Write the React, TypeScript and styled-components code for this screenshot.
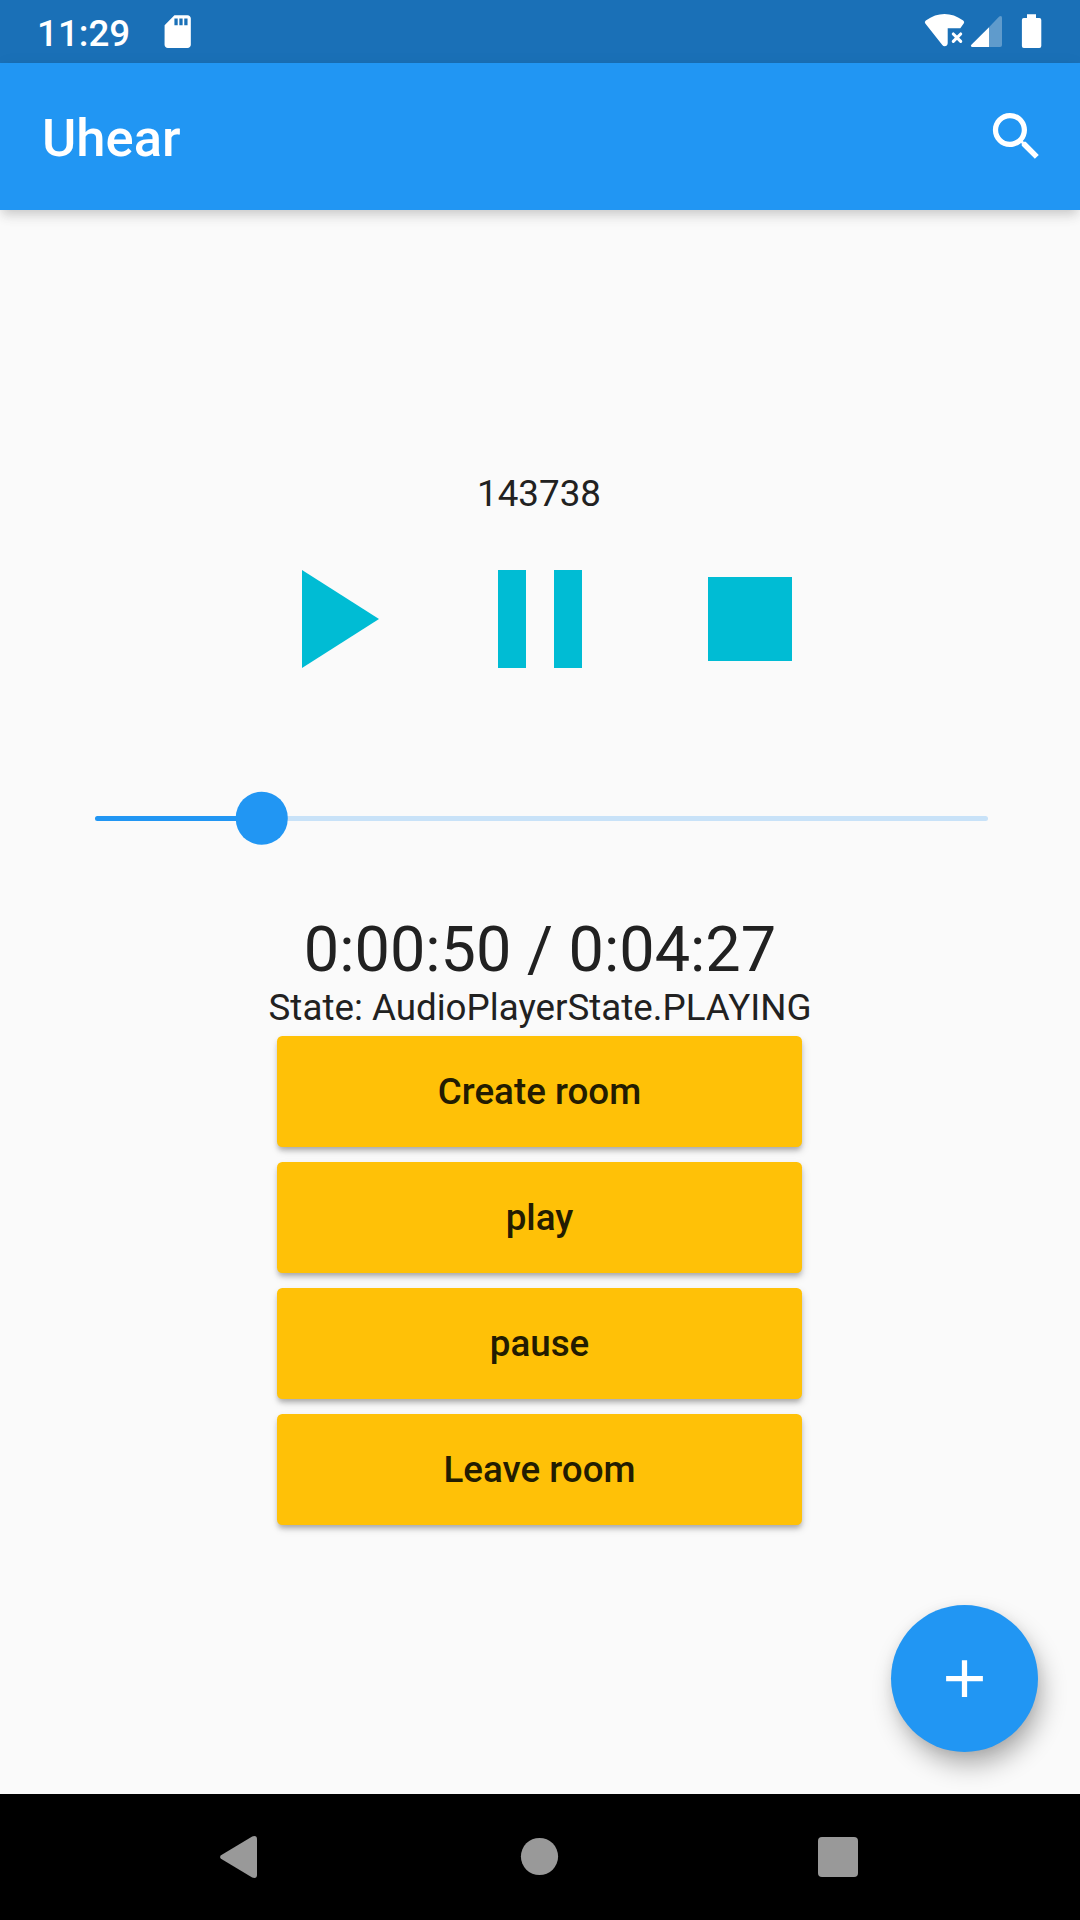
import React from "react";
import styled, { createGlobalStyle } from "styled-components";

const GlobalStyle = createGlobalStyle`
  html, body { margin: 0; padding: 0; }
  body { font-family: Roboto, "Noto Sans", sans-serif; background: #fafafa; }
  button { font-family: inherit; border: 0; padding: 0; margin: 0; }
`;

const Screen = styled.div`
  position: relative;
  width: 1080px;
  height: 1920px;
  display: flex;
  flex-direction: column;
  overflow: hidden;
  background: #fafafa;
  color: #212121;
  svg { display: block; flex: none; }
`;

const StatusBar = styled.div`
  height: 63px;
  flex: none;
  display: flex;
  justify-content: space-between;
  background: #1a70b7;
  color: #fff;
`;

const StatusLeft = styled.div`
  display: flex;
  padding-left: 37px;
`;

const Clock = styled.span`
  width: 121px;
  padding-top: 12px;
  font-size: 36.75px;
  line-height: 43px;
  font-weight: 500;
`;

const CardIcon = styled.svg`
  margin-top: 11.9px;
`;

const AppBar = styled.header`
  height: 147px;
  flex: none;
  z-index: 1;
  box-sizing: border-box;
  display: flex;
  align-items: center;
  justify-content: space-between;
  padding: 0 32px 0 42px;
  background: #2196f3;
  color: #fff;
  box-shadow: 0 5.25px 10.5px -2.6px rgba(0, 0, 0, 0.16), 0 8px 13px rgba(0, 0, 0, 0.04), 0 2.6px 20px rgba(0, 0, 0, 0.04);
`;

const Title = styled.h1`
  margin: 0;
  padding-top: 2px;
  font-size: 52.5px;
  line-height: 62px;
  font-weight: 500;
`;

const IconButton = styled.button`
  background: none;
  color: inherit;
`;

const Player = styled.main`
  flex: 1;
  display: flex;
  flex-direction: column;
  align-items: center;
  justify-content: center;
`;

const Label = styled.div`
  font-size: 36.75px;
  line-height: 43.5px;
`;

const RoomCode = styled(Label)`
  padding: 2px 2px 0 0;
`;

const Controls = styled.div`
  display: flex;
  gap: 42px;
  padding: 19px 0 21px;
  color: #00bcd4;
`;

const SliderBox = styled.div`
  width: 893px;
  height: 126px;
  margin: 31.5px 0 31.5px 2px;
  display: flex;
  align-items: center;
`;

const Track = styled.div`
  position: relative;
  width: 100%;
  height: 5.25px;
  border-radius: 3px;
  background: #c8e2f8;
`;

const Fill = styled.div`
  height: 100%;
  border-radius: 3px;
  background: #2196f3;
`;

const Thumb = styled.div`
  position: absolute;
  top: 50%;
  width: 52.5px;
  height: 52.5px;
  border-radius: 50%;
  transform: translate(-50%, -50%);
  background: #2196f3;
`;

const Time = styled.div`
  font-size: 63px;
  line-height: 73.5px;
`;

const Actions = styled.div`
  display: flex;
  flex-direction: column;
  gap: 15.75px;
  padding: 6.5px 1px 9px 0;
`;

const ActionButton = styled.button`
  width: 525px;
  height: 110.25px;
  border-radius: 5.25px;
  background: #ffc107;
  color: #231c01;
  font-size: 36.75px;
  line-height: 43px;
  font-weight: 500;
  box-shadow: 0 4px 5px -1px rgba(0, 0, 0, 0.24), 1px 4px 9px rgba(0, 0, 0, 0.12);
`;

const Fab = styled.button`
  position: absolute;
  right: 42px;
  bottom: 168px;
  width: 147px;
  height: 147px;
  display: flex;
  align-items: center;
  justify-content: center;
  border-radius: 50%;
  background: #2196f3;
  color: #fff;
  box-shadow: 5px 14px 26px -2px rgba(0, 0, 0, 0.32), 0 2px 12px rgba(0, 0, 0, 0.06);
`;

const NavBar = styled.nav`
  position: relative;
  z-index: 1;
  height: 126px;
  flex: none;
  display: flex;
  align-items: center;
  justify-content: space-between;
  box-sizing: border-box;
  padding: 0 222px 0 220px;
  background: #000;
  color: #999;
`;

const Icon = ({ size, d }: { size: number; d: string }) => (
  <svg width={size} height={size} viewBox="0 0 24 24" fill="currentColor">
    <path d={d} />
  </svg>
);

const controls = ["M8 5v14l11-7z", "M6 19h4V5H6v14zm8-14v14h4V5h-4z", "M6 6h12v12H6z"];
const actions = ["Create room", "play", "pause", "Leave room"];
const progress = 50 / 267;

export default function App() {
  return (
    <Screen>
      <GlobalStyle />
      <StatusBar>
        <StatusLeft>
          <Clock>11:29</Clock>
          <CardIcon width="39.4" height="39.4" viewBox="0 0 24 24" fill="#fff">
            <path d="M18 2h-8L4.02 8 4 20c0 1.1.9 2 2 2h12c1.1 0 2-.9 2-2V4c0-1.1-.9-2-2-2zm-6 6h-2V4h2v4zm3 0h-2V4h2v4zm3 0h-2V4h2v4z" />
          </CardIcon>
        </StatusLeft>
        <svg width="160" height="63" viewBox="0 0 160 63" fill="#fff">
          <path d="M5.3 23.6Q4 21.8 5.8 20.4C18 11.8 31 11.8 43.2 20.4Q45 21.8 43.7 23.6L40.3 28.2H27.7V43.2Q27.5 46 24.5 46.2Q23.3 46.2 22.3 45Z" />
          <path d="M33.3 34l7.4 7.4M40.7 34l-7.4 7.4" stroke="#fff" strokeWidth="3.1" strokeLinecap="round" />
          <path d="M69 27.2L79.2 16.6Q82 14.8 82 18V45Q82 47 80 47H69Z" opacity=".3" />
          <path d="M69 27.2V47H52Q50 46.4 51.4 44.8Z" />
          <path d="M107 14.2h9V18h3.4q1.9 0 1.9 1.9v26q0 2-1.9 2h-15.6q-1.9 0-1.9-2v-26q0-1.9 1.9-1.9H107z" />
        </svg>
      </StatusBar>
      <AppBar>
        <Title>Uhear</Title>
        <IconButton aria-label="Search">
          <Icon size={63} d="M15.5 14h-.79l-.28-.27C15.41 12.59 16 11.11 16 9.5 16 5.91 13.09 3 9.5 3S3 5.91 3 9.5 5.91 16 9.5 16c1.61 0 3.09-.59 4.23-1.57l.27.28v.79l5 4.99L20.49 19l-4.99-5zm-6 0C7.01 14 5 11.99 5 9.5S7.01 5 9.5 5 14 7.01 14 9.5 11.99 14 9.5 14z" />
        </IconButton>
      </AppBar>
      <Player>
        <RoomCode>143738</RoomCode>
        <Controls>
          {controls.map((d) => (
            <IconButton key={d}>
              <Icon size={168} d={d} />
            </IconButton>
          ))}
        </Controls>
        <SliderBox>
          <Track>
            <Fill style={{ width: `${progress * 100}%` }} />
            <Thumb style={{ left: `${progress * 100}%` }} />
          </Track>
        </SliderBox>
        <Time>0:00:50 / 0:04:27</Time>
        <Label>State: AudioPlayerState.PLAYING</Label>
        <Actions>
          {actions.map((label) => (
            <ActionButton key={label}>{label}</ActionButton>
          ))}
        </Actions>
      </Player>
      <Fab aria-label="Add">
        <Icon size={63} d="M19 13h-6v6h-2v-6H5v-2h6V5h2v6h6v2z" />
      </Fab>
      <NavBar>
        <svg width="37" height="42" viewBox="0 0 37 42" fill="currentColor">
          <path d="M1 19.2L32.2.5Q37-1 37 3.3V38.7Q37 43 32.2 41.5L1 22.8Q-.8 21 1 19.2Z" />
        </svg>
        <svg width="38" height="38" viewBox="0 0 38 38" fill="currentColor" overflow="visible">
          <circle cx="20.5" cy="18.5" r="18.6" />
        </svg>
        <svg width="40" height="40" viewBox="0 0 40 40" fill="currentColor">
          <rect width="40" height="40" rx="4" />
        </svg>
      </NavBar>
    </Screen>
  );
}
